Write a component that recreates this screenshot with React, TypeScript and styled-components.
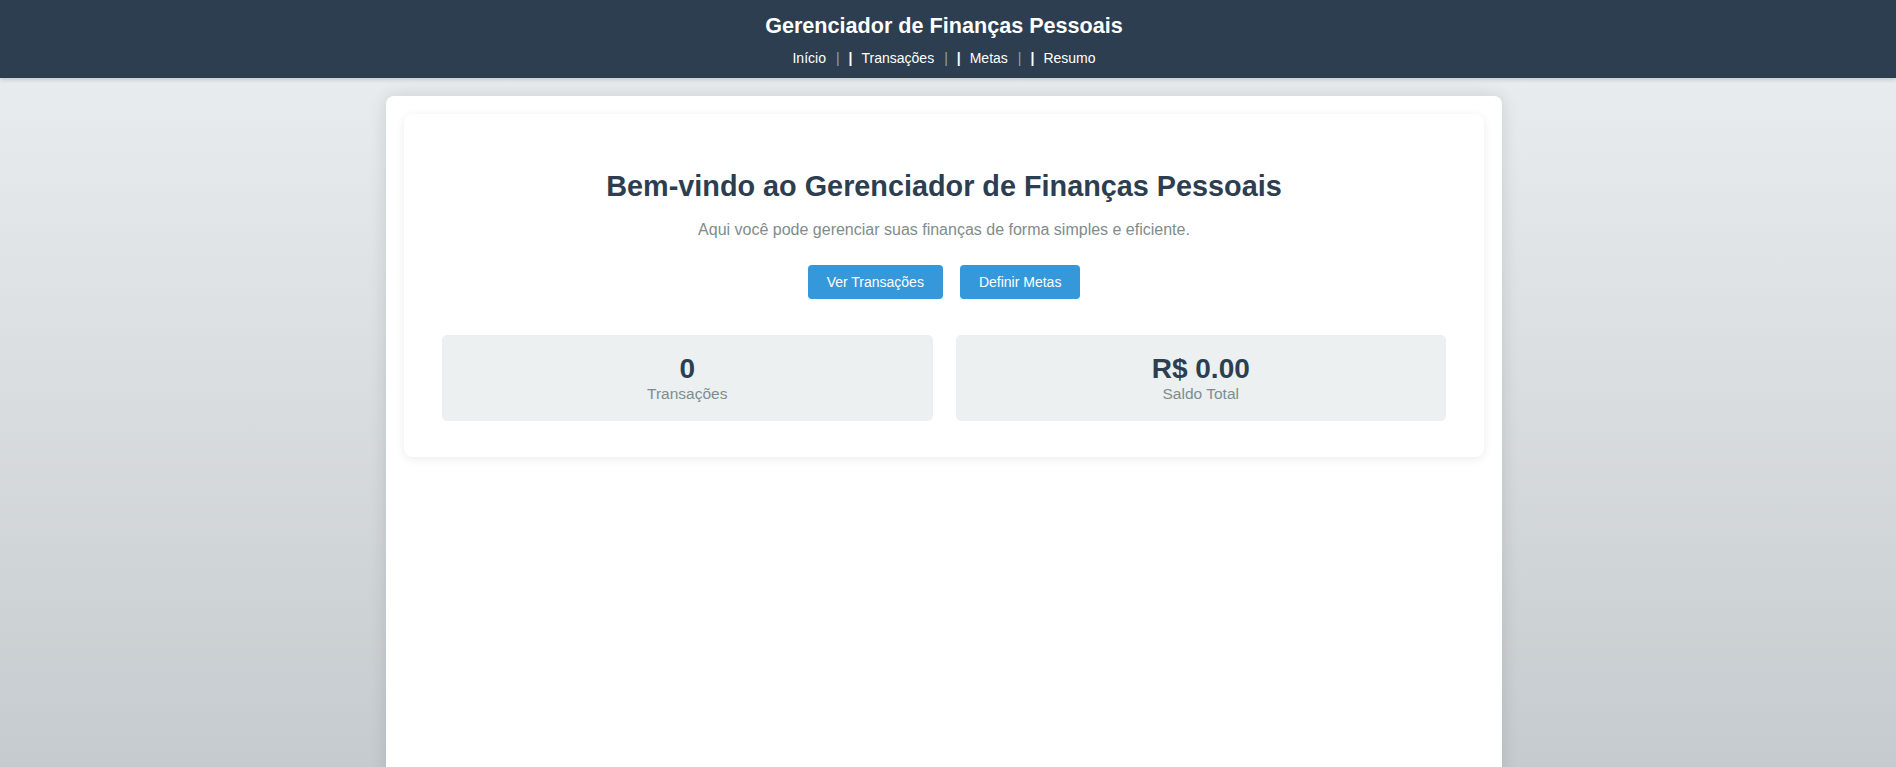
import styled, { createGlobalStyle } from "styled-components";

const GlobalStyle = createGlobalStyle`
  html, body {
    margin: 0;
    padding: 0;
  }
  body {
    font-family: "Liberation Sans", Arial, sans-serif;
    background: linear-gradient(to bottom, #ecf0f1 0%, #c6cbcf 100%) fixed;
    min-height: 100vh;
    overflow: hidden;
  }
`;

const Header = styled.header`
  background-color: #2c3e50;
  color: #fff;
  padding: 13px 8px 12px 0;
  text-align: center;
  box-shadow: 0 2px 4px rgba(0, 0, 0, 0.15);
  position: relative;
  z-index: 1;
`;

const Title = styled.h1`
  margin: 0 0 11px;
  font-size: 21.6px;
  font-weight: 700;
  line-height: normal;
`;

const Nav = styled.nav`
  display: flex;
  justify-content: center;
  align-items: baseline;
  font-size: 14px;
  line-height: normal;
`;

const NavLink = styled.a`
  color: #fff;
  text-decoration: none;
`;

const Sep = styled.span<{ $light?: boolean }>`
  color: ${(p) => (p.$light ? "#fff" : "#95a5a6")};
  font-weight: ${(p) => (p.$light ? 700 : 400)};
  margin-left: ${(p) => (p.$light ? "9px" : "10px")};
  margin-right: ${(p) => (p.$light ? "9px" : "0")};
`;

const Main = styled.main`
  padding: 18px 8px 0 0;
`;

const Container = styled.div`
  width: 1116px;
  box-sizing: border-box;
  margin: 0 auto;
  padding: 18px;
  min-height: 900px;
  background: #fff;
  border-radius: 8px;
  box-shadow: 0 0 18px rgba(0, 0, 0, 0.12);
`;

const Card = styled.section`
  background: #fff;
  border-radius: 8px;
  box-shadow: 0 2px 10px rgba(0, 0, 0, 0.08);
  padding: 36px 38px;
  text-align: center;
`;

const Heading = styled.h2`
  margin: 20px 0 18px;
  font-size: 28.8px;
  font-weight: 700;
  line-height: normal;
  color: #2c3e50;
`;

const Subtitle = styled.p`
  margin: 0 0 26px;
  font-size: 16px;
  color: #7f8c8d;
  line-height: normal;
`;

const Actions = styled.div`
  display: flex;
  justify-content: center;
  gap: 17px;
  margin-bottom: 36px;
`;

const Button = styled.button`
  font-family: inherit;
  font-size: 14px;
  line-height: 16px;
  padding: 9px 19px;
  color: #fff;
  background-color: #3498db;
  border: none;
  border-radius: 4px;
  cursor: pointer;
`;

const Stats = styled.div`
  display: grid;
  grid-template-columns: 1fr 1fr;
  gap: 23px;
`;

const StatCard = styled.div`
  background: #ecf0f1;
  border-radius: 5px;
  padding: 18px;
  display: flex;
  flex-direction: column;
  align-items: center;
`;

const StatValue = styled.span`
  font-size: 28px;
  font-weight: 700;
  color: #2c3e50;
  line-height: normal;
`;

const StatLabel = styled.span`
  font-size: 15.5px;
  color: #7f8c8d;
  line-height: normal;
`;

const links = ["Início", "Transações", "Metas", "Resumo"];

const stats = [
  { value: "0", label: "Transações" },
  { value: "R$ 0.00", label: "Saldo Total" },
];

const App = () => {
  return (
    <>
      <GlobalStyle />
      <Header>
        <Title>Gerenciador de Finanças Pessoais</Title>
        <Nav>
          {links.map((link, i) => (
            <span key={link}>
              <NavLink href="#">{link}</NavLink>
              {i < links.length - 1 && (
                <>
                  <Sep>|</Sep>
                  <Sep $light>|</Sep>
                </>
              )}
            </span>
          ))}
        </Nav>
      </Header>
      <Main>
        <Container>
          <Card>
            <Heading>Bem-vindo ao Gerenciador de Finanças Pessoais</Heading>
            <Subtitle>
              Aqui você pode gerenciar suas finanças de forma simples e
              eficiente.
            </Subtitle>
            <Actions>
              <Button>Ver Transações</Button>
              <Button>Definir Metas</Button>
            </Actions>
            <Stats>
              {stats.map((s) => (
                <StatCard key={s.label}>
                  <StatValue>{s.value}</StatValue>
                  <StatLabel>{s.label}</StatLabel>
                </StatCard>
              ))}
            </Stats>
          </Card>
        </Container>
      </Main>
    </>
  );
};

export default App;
